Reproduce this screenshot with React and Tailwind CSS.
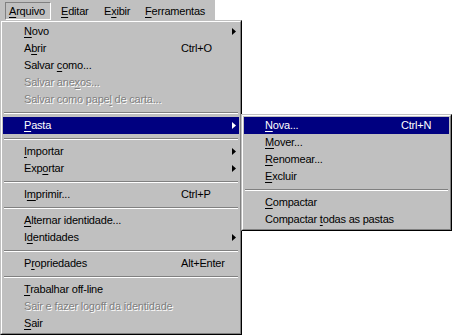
import React from 'react';

// '&' marks the accelerator letter
const mainItems = [
  { label: '&Novo', arrow: true },
  { label: 'A&brir', shortcut: 'Ctrl+O' },
  { label: 'Salvar &como...' },
  { label: 'Salvar ane&xos...', disabled: true },
  { label: 'Salvar como pape&l de carta...', disabled: true },
  { sep: true },
  { label: '&Pasta', arrow: true, active: true },
  { sep: true },
  { label: '&Importar', arrow: true },
  { label: 'Exp&ortar', arrow: true },
  { sep: true },
  { label: 'I&mprimir...', shortcut: 'Ctrl+P' },
  { sep: true },
  { label: '&Alternar identidade...' },
  { label: 'I&dentidades', arrow: true },
  { sep: true },
  { label: 'P&ropriedades', shortcut: 'Alt+Enter' },
  { sep: true },
  { label: '&Trabalhar off-line' },
  { label: 'Sair e fazer logoff da identidade', disabled: true },
  { label: '&Sair' },
];

const subItems = [
  { label: '&Nova...', shortcut: 'Ctrl+N', active: true },
  { label: '&Mover...' },
  { label: '&Renomear...' },
  { label: '&Excluir' },
  { sep: true },
  { label: '&Compactar' },
  { label: 'Compactar &todas as pastas' },
];

const Label = ({ text }) => {
  const i = text.indexOf('&');
  if (i < 0) return <>{text}</>;
  return (
    <>
      {text.slice(0, i)}
      <u className="underline-offset-[2px]">{text[i + 1]}</u>
      {text.slice(i + 2)}
    </>
  );
};

const Arrow = () => (
  <svg width="4" height="7" viewBox="0 0 4 7" className="fill-current">
    <polygon points="0,0 4,3.5 0,7" />
  </svg>
);

const Separator = () => (
  <div className="h-[9px] pt-[4px] px-[1px]">
    <div className="border-t border-t-[#808080] border-b border-b-white" />
  </div>
);

const Row = ({ item, labelWidth }) => {
  let color = 'text-black';
  if (item.active) color = 'bg-[#000080] text-white';
  if (item.disabled) color = 'text-[#808080] [text-shadow:1px_1px_0_#fff]';
  return (
    <div className={`flex items-center h-[17px] pl-[21px] pr-[3px] ${color}`}>
      <div className="whitespace-nowrap" style={{ width: labelWidth }}>
        <Label text={item.label} />
      </div>
      <div className="flex-1 whitespace-nowrap">{item.shortcut}</div>
      {item.arrow && <Arrow />}
    </div>
  );
};

const Menu = ({ items, width, labelWidth }) => (
  <div
    className="border border-t-[#c0c0c0] border-l-[#c0c0c0] border-r-black border-b-black bg-[#c0c0c0]"
    style={{ width }}
  >
    <div className="border border-t-white border-l-white border-r-[#808080] border-b-[#808080] p-[1px]">
      {items.map((item, i) =>
        item.sep ? <Separator key={i} /> : <Row key={i} item={item} labelWidth={labelWidth} />
      )}
    </div>
  </div>
);

export default function App() {
  return (
    <div className="w-[452px] h-[336px] bg-white overflow-hidden text-[11px] tracking-[-0.2px] text-black font-['Liberation_Sans',Arial,sans-serif]">
      {/* menu bar */}
      <div className="w-[215px] h-[20px] bg-[#c0c0c0] flex items-start pt-[2px] pl-[5px]">
        <div className="w-[46px] h-[18px] flex items-center pl-[3px] border border-t-[#808080] border-l-[#808080] border-r-white border-b-white">
          <Label text="&Arquivo" />
        </div>
        <div className="w-[43px] h-[18px] flex items-center pl-[10px]">
          <Label text="&Editar" />
        </div>
        <div className="w-[41px] h-[18px] flex items-center pl-[10px]">
          <Label text="E&xibir" />
        </div>
        <div className="h-[18px] flex items-center pl-[10px]">
          <Label text="&Ferramentas" />
        </div>
      </div>

      {/* dropdown + submenu */}
      <div className="flex items-start">
        <Menu items={mainItems} width={242} labelWidth={157} />
        <div className="mt-[94px] -ml-px relative">
          <Menu items={subItems} width={211} labelWidth={136} />
        </div>
      </div>
    </div>
  );
}
